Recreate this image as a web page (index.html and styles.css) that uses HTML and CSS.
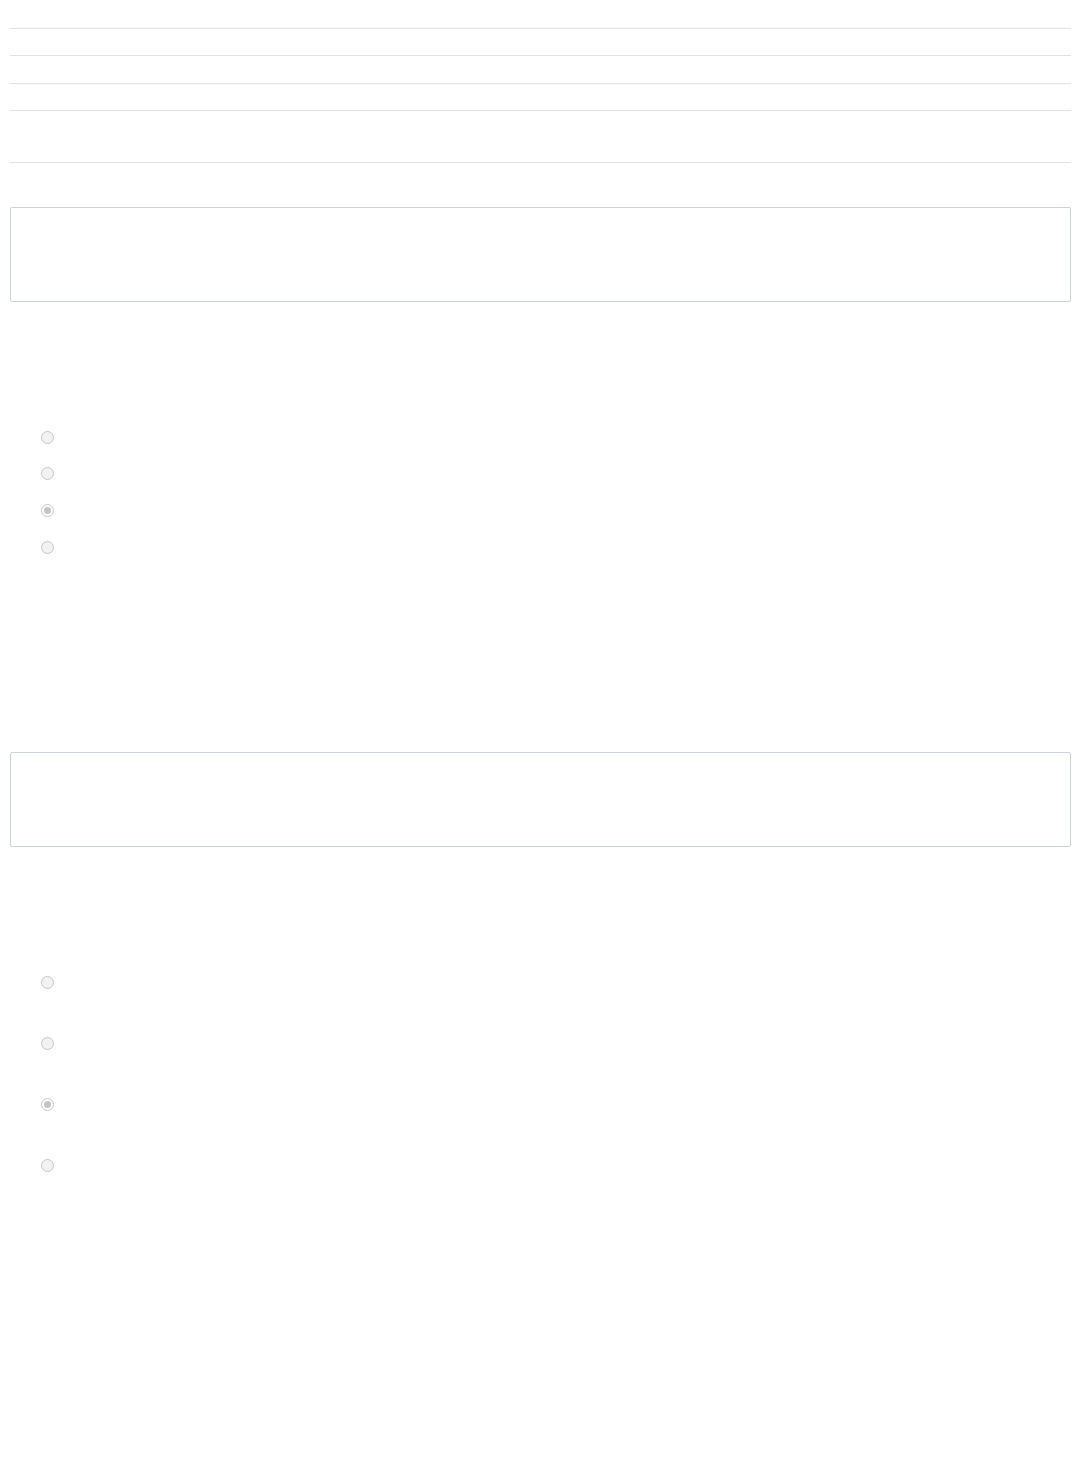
FILE: index.html
```html
<!DOCTYPE html>
<html>
<head>
  <link rel="stylesheet" href="styles.css">
</head>
<body>
  <div class="page">
    <div class="rules">
      <div class="rule r1"></div>
      <div class="rule r2"></div>
      <div class="rule r3"></div>
      <div class="rule r4"></div>
      <div class="rule end"></div>
    </div>

    <div class="box"></div>

    <div class="options">
      <label class="option"><input type="radio" name="q1" disabled></label>
      <label class="option"><input type="radio" name="q1" disabled></label>
      <label class="option"><input type="radio" name="q1" checked disabled></label>
      <label class="option"><input type="radio" name="q1" disabled></label>
    </div>

    <div class="box second"></div>

    <div class="options wide">
      <label class="option"><input type="radio" name="q2" disabled></label>
      <label class="option"><input type="radio" name="q2" disabled></label>
      <label class="option"><input type="radio" name="q2" checked disabled></label>
      <label class="option"><input type="radio" name="q2" disabled></label>
    </div>
  </div>
</body>
</html>
```

FILE: styles.css
```css
body {
  margin: 0;
  font-family: "Liberation Sans", Arial, sans-serif;
  background: #fff;
}

.page {
  padding: 0 8px 0 10px;
}

.rules {
  margin-top: 28px;
}

.rule {
  border-top: 1px solid #e2e2e4;
  box-sizing: border-box;
}

.r1 { height: 27px; }
.r2 { height: 28px; }
.r3 { height: 27px; }
.r4 { height: 52px; }
.end { height: 1px; }

.box {
  margin-top: 44px;
  height: 95px;
  box-sizing: border-box;
  border: 1px solid #ccd2dc;
  border-radius: 2px;
}

.box.second {
  margin-top: 198px;
}

.options {
  margin-top: 129px;
  padding-left: 31px;
  display: flex;
  flex-direction: column;
  gap: 23px;
}

.options .option:nth-child(n+3) {
  margin-top: 1px;
}

.options.wide {
  gap: 48px;
}

.options.wide .option:nth-child(n+3) {
  margin-top: 0;
}

.option {
  display: flex;
  align-items: center;
  height: 13px;
}

.option input {
  appearance: none;
  -webkit-appearance: none;
  margin: 0;
  width: 13px;
  height: 13px;
  border-radius: 50%;
  border: 1px solid #c6c6c6;
  background: #f2f2f2;
  box-sizing: border-box;
  position: relative;
}

.option input:checked {
  background: #fff;
}

.option input:checked::after {
  content: "";
  position: absolute;
  top: 2px;
  left: 2px;
  width: 7px;
  height: 7px;
  border-radius: 50%;
  background: #c4c4c4;
}
```
